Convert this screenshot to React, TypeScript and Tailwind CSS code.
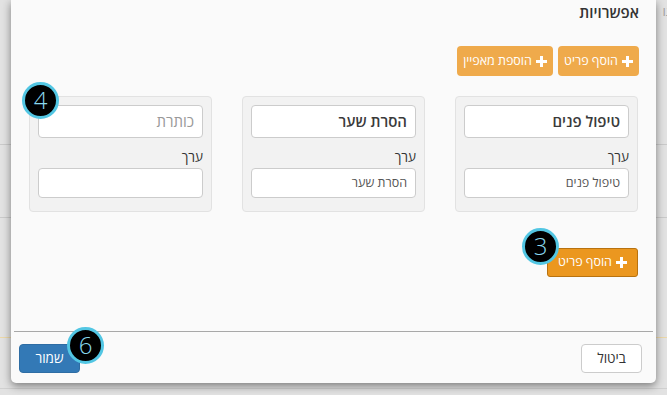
import React from "react";

const font = { fontFamily: '"Open Sans", "DejaVu Sans", sans-serif' };

const Plus = () => (
  <svg width="11" height="11" viewBox="0 0 11 11" className="shrink-0">
    <path d="M4 0h3v4h4v3H7v4H4V7H0V4h4z" fill="white" />
  </svg>
);

const Badge = ({ n, className }: { n: string; className: string }) => (
  <div
    className={
      "absolute w-[37px] h-[37px] rounded-full bg-black border-[3px] border-[#52c6e3] flex items-center justify-center text-[24px] leading-none text-[#8ad9ee] font-light " +
      className
    }
  >
    <span className="-mt-[1px]">{n}</span>
  </div>
);

const Card = ({ title, value, placeholder }: { title?: string; value?: string; placeholder?: string }) => (
  <div className="bg-[#f2f2f2] border border-[#e2e2e2] rounded-[4px] px-[8px] pt-[8px] pb-[13px]">
    <div className="h-[33px] bg-white border border-[#cccccc] rounded-[4px] flex items-center pr-[8px] text-[15px]">
      {title ? <span className="text-[#3a3a3a] font-semibold">{title}</span> : <span className="text-[#999]">{placeholder}</span>}
    </div>
    <div className="mt-[10px] h-[18px] leading-[18px] text-[13.5px] text-[#333]">ערך</div>
    <div className="mt-[2px] h-[30px] bg-white border border-[#cccccc] rounded-[4px] flex items-center pr-[8px] text-[12.5px] text-[#555]">
      {value}
    </div>
  </div>
);

export default function App() {
  return (
    <div className="relative w-[667px] h-[395px] bg-[#e2e2e2] overflow-hidden" style={font}>
      {/* page behind overlay */}
      <div className="absolute inset-0 flex flex-col">
        <div className="h-[145px] border-b border-[#cacaca]"></div>
        <div className="h-[73px] border-b border-[#cacaca]"></div>
        <div className="h-[120px] border-b border-[#ecd8a8]"></div>
        <div className="h-[51px] border-b border-[#d0d0d0]"></div>
      </div>
      <div className="absolute right-[-4px] top-[2px] text-[13px] text-[#a0a0a0]" dir="rtl">גו</div>

      {/* modal */}
      <div
        dir="rtl"
        className="relative ml-[11px] w-[645px] h-[383px] bg-[#fafafa] rounded-b-[5px] shadow-[0_3px_9px_rgba(0,0,0,0.45)] flex flex-col"
      >
        <div className="pr-[17px] pt-[2px] leading-[20px] text-[15px] font-semibold text-[#333]">אפשרויות</div>

        <div className="flex gap-[5px] pr-[17px] mt-[24px]">
          <div className="h-[30px] w-[81px] bg-[#efaa4b] rounded-[4px] flex items-center justify-center gap-[4px] text-white text-[12.5px]">
            <Plus />
            <span>הוסף פריט</span>
          </div>
          <div className="h-[30px] w-[96px] bg-[#efaa4b] rounded-[4px] flex items-center justify-center gap-[4px] text-white text-[12.5px]">
            <Plus />
            <span>הוספת מאפיין</span>
          </div>
        </div>

        <div className="grid grid-cols-3 gap-[30px] pr-[18px] pl-[18px] mt-[20px]">
          <Card title="טיפול פנים" value="טיפול פנים" />
          <Card title="הסרת שער" value="הסרת שער" />
          <Card placeholder="כותרת" />
        </div>

        <div className="flex pr-[18px] mt-[36px]">
          <div className="h-[29px] w-[91px] bg-[#eb971f] border border-[#b8720f] rounded-[3px] flex items-center justify-center gap-[4px] text-white text-[12.5px]">
            <Plus />
            <span>הוסף פריט</span>
          </div>
        </div>

        <div className="mt-auto mx-[3px] border-t border-[#a8a8a8]"></div>
        <div className="flex justify-between pr-[14px] pl-[8px] pt-[12px] pb-[10px]">
          <div className="h-[29px] w-[61px] bg-white border border-[#cccccc] rounded-[4px] flex items-center justify-center text-[13.5px] text-[#333]">
            ביטול
          </div>
          <div className="h-[29px] w-[61px] bg-[#3379b6] border border-[#2e6da4] rounded-[4px] flex items-center justify-center text-[13.5px] text-white">
            שמור
          </div>
        </div>

        <Badge n="4" className="left-[11px] top-[82px]" />
        <Badge n="3" className="left-[511px] top-[228px]" />
        <Badge n="6" className="left-[56px] top-[327px]" />
      </div>
    </div>
  );
}
